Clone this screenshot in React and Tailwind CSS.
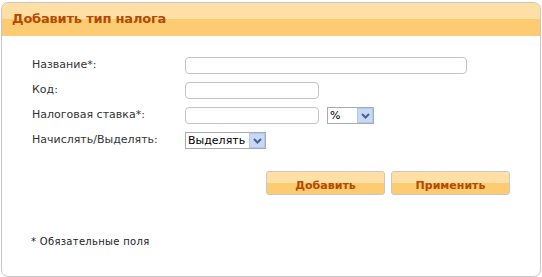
import React from 'react';

const font = { fontFamily: '"DejaVu Sans", Verdana, sans-serif' };

function ArrowBox() {
  return (
    <span className="flex h-[15px] w-[16px] items-center justify-center border border-[#b4c8ef] bg-[#c7d8f9]">
      <svg width="9" height="6" viewBox="0 0 9 6">
        <path d="M1 1 L4.5 4.5 L8 1" fill="none" stroke="#4d6185" strokeWidth="2" />
      </svg>
    </span>
  );
}

function FakeSelect({ value, width }) {
  return (
    <div className={`flex h-[17px] items-center justify-between border border-[#a5acb2] bg-white ${width}`}>
      <span className="pl-[2px] text-[11px] leading-none text-black">{value}</span>
      <ArrowBox />
    </div>
  );
}

const inputClass = "h-[17px] rounded-[4px] border border-[#c4c4c4] bg-white";

export default function App() {
  return (
    <div className="h-[277px] w-[542px] bg-white px-[1px] pt-[2px] text-[#222]" style={font}>
      <div className="flex h-[275px] flex-col overflow-hidden rounded-[7px] border border-[#c6c6c6]">
        {/* Header */}
        <div className="relative h-[33px] bg-[#fdcb72]">
          <div className="h-[16px] bg-[#fee0a6]"></div>
          <h1 className="absolute left-[10px] top-[9px] text-[13px] font-bold leading-none tracking-[-0.2px] text-[#b54a00]">
            Добавить тип налога
          </h1>
        </div>

        {/* Form */}
        <div className="grid grid-cols-[153px_1fr] gap-y-[8px] pl-[30px] pt-[21px] text-[11px] text-[#333]">
          <label className="flex h-[17px] items-center">Название*:</label>
          <div className={`${inputClass} w-[282px]`}></div>

          <label className="flex h-[17px] items-center">Код:</label>
          <div className={`${inputClass} w-[134px]`}></div>

          <label className="flex h-[17px] items-center">Налоговая ставка*:</label>
          <div className="flex gap-[8px]">
            <div className={`${inputClass} w-[134px]`}></div>
            <FakeSelect value="%" width="w-[47px]" />
          </div>

          <label className="flex h-[17px] items-center">Начислять/Выделять:</label>
          <FakeSelect value="Выделять" width="w-[81px]" />
        </div>

        {/* Buttons */}
        <div className="flex justify-end gap-[6px] pr-[30px] pt-[22px]">
          {['Добавить', 'Применить'].map(label => (
            <button
              key={label}
              className="relative h-[24px] w-[119px] overflow-hidden rounded-[3px] border border-[#c8c8c8] bg-[#fdcb72]"
            >
              <span className="absolute inset-x-0 top-0 h-[11px] bg-[#fee0a6]"></span>
              <span className="relative text-[11px] font-bold text-[#b54a00]">{label}</span>
            </button>
          ))}
        </div>

        <div className="pl-[29px] pt-[42px] text-[10px] leading-none tracking-[0.3px] text-[#222]">* Обязательные поля</div>
      </div>
    </div>
  );
}
